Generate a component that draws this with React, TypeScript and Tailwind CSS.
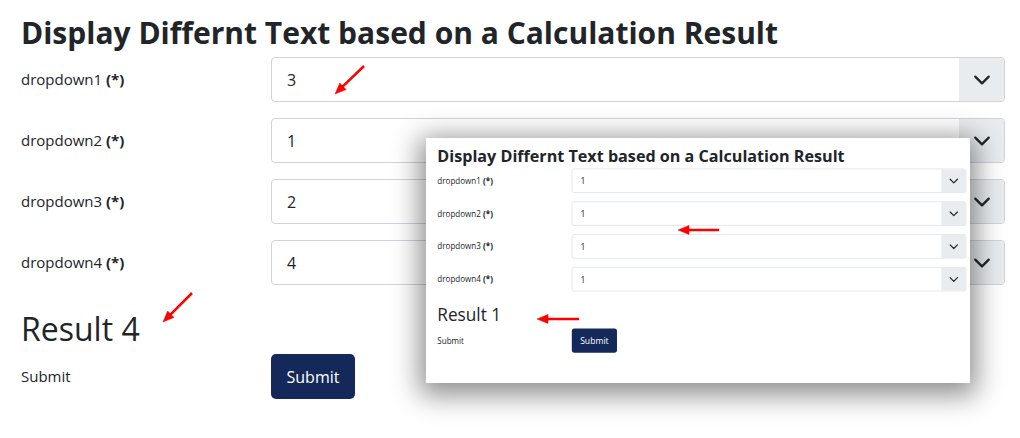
import React from 'react';

type FormProps = { values: string[]; result: string };

const Chevron = () => (
  <svg width="18" height="18" viewBox="0 0 16 16" fill="none" stroke="#212529" strokeWidth="2" strokeLinecap="round" strokeLinejoin="round">
    <path d="M2 5l6 6 6-6" />
  </svg>
);

const Form: React.FC<FormProps> = ({ values, result }) => (
  <div className="w-full pl-[21px] pr-[15px] font-['Open_Sans',sans-serif] text-[#212529]">
    <h1 className="h-[57px] pt-[13px] text-[30px] font-bold leading-[40px] whitespace-nowrap">
      Display Differnt Text based on a Calculation Result
    </h1>
    <div className="flex flex-col gap-4">
      {values.map((v, i) => (
        <div key={i} className="flex h-[45px] items-center">
          <label className="w-[250px] shrink-0 text-[15px]">
            dropdown{i + 1} <b>(*)</b>
          </label>
          <div className="flex h-full flex-1 overflow-hidden rounded-[4px] border border-[#ced4da] bg-white">
            <div className="flex flex-1 items-center pl-[15px] text-[16px]">{v}</div>
            <div className="flex w-[45px] items-center justify-center bg-[#e9ecef]">
              <Chevron />
            </div>
          </div>
        </div>
      ))}
    </div>
    <div className="h-[69px] pt-[20px] text-[32px] font-normal leading-[48px]">{result}</div>
    <div className="flex h-[45px] items-center">
      <span className="w-[250px] shrink-0 text-[15px]">Submit</span>
      <button className="h-[45px] w-[84px] rounded-[5px] bg-[#14295a] text-[16px] text-white">Submit</button>
    </div>
  </div>
);

const arrows = [
  { x1: 364, y1: 66, x2: 335, y2: 94 },
  { x1: 192, y1: 293, x2: 163, y2: 322 },
  { x1: 719, y1: 230, x2: 678, y2: 230 },
  { x1: 579, y1: 319, x2: 537, y2: 319 },
];

const head = (a: { x1: number; y1: number; x2: number; y2: number }) => {
  const dx = a.x2 - a.x1;
  const dy = a.y2 - a.y1;
  const len = Math.hypot(dx, dy);
  const ux = dx / len;
  const uy = dy / len;
  const bx = a.x2 - ux * 11;
  const by = a.y2 - uy * 11;
  const px = -uy * 4.5;
  const py = ux * 4.5;
  return `${a.x2},${a.y2} ${bx + px},${by + py} ${bx - px},${by - py}`;
};

export default function App() {
  return (
    <div className="relative h-[438px] w-[1020px] overflow-hidden bg-white">
      <Form values={['3', '1', '2', '4']} result="Result 4" />

      {/* inset screenshot */}
      <div className="absolute left-[426px] top-[138px] h-[245px] w-[544px] overflow-hidden bg-white shadow-[0_6px_26px_6px_rgba(0,0,0,0.45)]">
        <div className="w-[1019px] origin-top-left scale-[0.538]">
          <Form values={['1', '1', '1', '1']} result="Result 1" />
        </div>
      </div>

      <svg className="pointer-events-none absolute left-0 top-0" width="1020" height="438">
        {arrows.map((a, i) => {
          const dx = a.x2 - a.x1;
          const dy = a.y2 - a.y1;
          const len = Math.hypot(dx, dy);
          return (
            <g key={i} fill="#f00" stroke="#f00">
              <line x1={a.x1} y1={a.y1} x2={a.x2 - (dx / len) * 8} y2={a.y2 - (dy / len) * 8} strokeWidth="2.5" />
              <polygon points={head(a)} strokeWidth="0.5" />
            </g>
          );
        })}
      </svg>
    </div>
  );
}
